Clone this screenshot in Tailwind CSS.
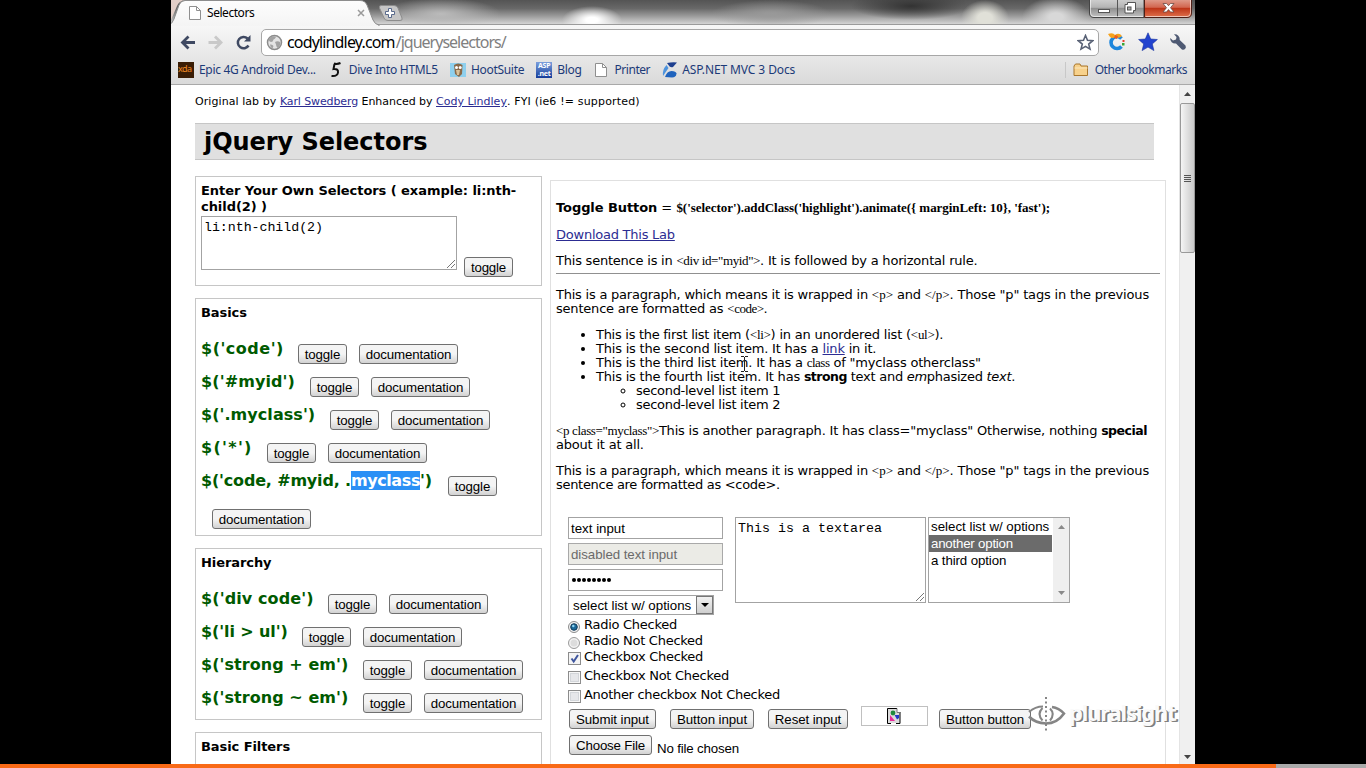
<!DOCTYPE html>
<html lang="en">
<head>
<meta charset="utf-8">
<title>Selectors</title>
<script src="https://cdn.jsdelivr.net/npm/@tailwindcss/browser@4"></script>
</head>
<body class="bg-black h-[768px] w-[1366px] overflow-hidden flex flex-col">
<div class="relative ml-[171px] w-[1024px] h-[764px] shrink-0 bg-white overflow-hidden flex flex-col">

  <!-- tab strip -->
  <div class="relative h-[24px] shrink-0 flex bg-[radial-gradient(ellipse_30px_14px_at_421px_20px,#fff_20%,transparent),radial-gradient(ellipse_24px_18px_at_814px_18px,#e0e0d8_30%,transparent),radial-gradient(ellipse_34px_20px_at_885px_17px,#d8d8d8_20%,transparent),radial-gradient(ellipse_60px_14px_at_600px_14px,#999,transparent),radial-gradient(ellipse_60px_16px_at_270px_14px,#bbb,transparent),radial-gradient(ellipse_60px_14px_at_740px_6px,#333,transparent),linear-gradient(#545454,#686868_35%,#a0a0a0_70%,#d4d4d4)]">
    <svg class="absolute left-0 top-0" width="240" height="26" viewBox="0 0 240 26">
      <defs><linearGradient id="tb" x1="0" y1="0" x2="0" y2="1"><stop offset="0" stop-color="#fdfdfd"/><stop offset="1" stop-color="#f4f4f4"/></linearGradient></defs>
      <path d="M0 0H14Q8 1 6 6L0 20Z" fill="#e3cfc8"/>
      <path d="M-2 25Q1 24 3 19L8 5Q10 0.5 14 0.5H189Q194 0.500 196 5L202 20Q204 24.500 208 25V27H-2Z" fill="url(#tb)" stroke="#8d8d8d"/>
      <path d="M210.500 5.500H223Q226 5.500 227 8L231 18Q232 20.500 229 20.500H217Q214 20.500 213 18L208.500 8Q207.500 5.500 210.500 5.500Z" fill="#c6c6c6" stroke="#8c8c8c"/>
      <path d="M217.500 8.500h3v3h3v3h-3v3h-3v-3h-3v-3h3Z" fill="#fff" stroke="#5a6b8c"/>
      <path d="M18.500 6.500h7l4 4v9h-11Z" fill="#fff" stroke="#8f8f8f"/><path d="M25.500 6.500v4h4" fill="none" stroke="#8f8f8f"/>
      <path d="M187 10l6 6M193 10l-6 6" stroke="#9a9a9a" stroke-width="1.500"/>
    </svg>
    <span class="relative ml-[36px] mt-[5px] font-['Noto_Sans',sans-serif] text-[12px] leading-[16px] tracking-[-0.45px]">Selectors</span>
    <svg class="absolute left-[918px] top-0" width="106" height="20" viewBox="0 0 106 20">
      <defs>
        <linearGradient id="gb" x1="0" y1="0" x2="0" y2="1"><stop offset="0" stop-color="#d0d0d0"/><stop offset=".45" stop-color="#b4b4b4"/><stop offset=".5" stop-color="#8f8f8f"/><stop offset="1" stop-color="#c4c4c4"/></linearGradient>
        <linearGradient id="rb" x1="0" y1="0" x2="0" y2="1"><stop offset="0" stop-color="#e0a090"/><stop offset=".45" stop-color="#d2664f"/><stop offset=".5" stop-color="#bd3417"/><stop offset="1" stop-color="#e0734f"/></linearGradient>
      </defs>
      <path d="M0.500 -1V13Q0.500 17.500 5 17.500H55V-1Z" fill="url(#gb)" stroke="#444"/>
      <path d="M55.500 -1V17.500H98Q102.500 17.500 102.500 13V-1Z" fill="url(#rb)" stroke="#4d2018"/>
      <path d="M28.500 0V17" stroke="#555"/>
      <path d="M1.500 0V13Q1.500 16.500 5 16.500H54M56.500 16.500H98Q101.500 16.500 101.500 13V0" fill="none" stroke="#fff" stroke-opacity=".6"/>
      <rect x="9.500" y="9.500" width="11" height="3" fill="#fff" stroke="#555"/>
      <path d="M38.500 2.500h8v8h-2v2.500h-8.500V4.500h2.500Z" fill="#fff" stroke="#555"/><rect x="38.500" y="7" width="3.500" height="3" fill="#aaa" stroke="#555"/>
      <path d="M74 3.500h3.500l2 2.200 2-2.200H85l-3.500 4.200L85 12h-3.500l-2-2.400-2 2.400H74l3.500-4.300Z" fill="#fff" stroke="#6b4a44" stroke-width=".8"/>
    </svg>
  </div>

  <!-- toolbar -->
  <div class="h-[61px] shrink-0 bg-linear-to-b from-[#f7f7f7] to-[#dadada] border-t border-b border-t-[#9b9b9b] border-b-[#a9a9a9] flex flex-col">
    <div class="flex items-center h-[33px] pt-[1px]">
      <svg class="shrink-0" width="90" height="30" viewBox="0 0 90 30">
        <path d="M17.500 9.500L11.500 15.500L17.500 21.500M12 15.500H24" fill="none" stroke="#3f4962" stroke-width="2.800"/>
        <path d="M44 9.500L50 15.500L44 21.500M49.500 15.500H37.500" fill="none" stroke="#c9c9c9" stroke-width="2.800"/>
        <path d="M76.500 11.500A5.700 5.700 0 1 0 77.500 18.500" fill="none" stroke="#3f4962" stroke-width="2.500"/><path d="M79.500 8v6.500h-6.500Z" fill="#3f4962"/>
      </svg>
      <div class="w-[838px] h-[27px] rounded-[5px] border border-[#a7a7a7] bg-white flex items-center pl-[4px] pr-[4px] font-['Noto_Sans',sans-serif] text-[16px] leading-[24px] tracking-[-0.84px]">
        <svg width="17" height="17" viewBox="0 0 17 17"><circle cx="8.500" cy="8.500" r="7" fill="#e4e4e4" stroke="#8c8c8c" stroke-width="1.500"/><path d="M4 3.500Q8 1.500 10 3Q9 5 7.500 5.500Q7 8 5 8Q3 7.500 2.500 6ZM9 8Q12 6.500 14.500 8.500Q14.500 12 11.500 14Q10 12 10 10.500ZM4 10.500Q6.500 10 7.500 12L6.500 14.500Q4 13.500 4 10.500Z" fill="#a3a3a3"/></svg>
        <span class="ml-[4px]">codylindley.com</span><span class="text-[#808080] tracking-[-0.99px] ml-[1px]">/jqueryselectors/</span>
        <svg class="ml-auto" width="17" height="17" viewBox="0 0 17 17"><path d="M8.500 1.500l2 4.800 5.200.4-4 3.400 1.300 5-4.500-2.700L4 15.100l1.300-5-4-3.400 5.200-.4Z" fill="#fff" stroke="#596276" stroke-width="1.600"/></svg>
      </div>
      <svg class="ml-[8px]" width="20" height="22" viewBox="0 0 20 22"><path d="M14.500 7.500A6 6 0 1 0 14.500 15.500" fill="none" stroke="#1d86dc" stroke-width="3.600"/><path d="M1 3Q6 1 8 4Q12 1 15 5Q12 8 9 6Q5 8 3 6Z" fill="#f6a21c"/><path d="M8 4l3 1-1 3-3-1Z" fill="#ee5a1c"/><path d="M15.500 9h2v2h-2Z" fill="#e83c2b"/><path d="M15 12h2.500v2.500h-2.500Z" fill="#3aa535"/></svg>
      <svg class="ml-[11px]" width="20" height="20" viewBox="0 0 20 20"><path d="M10 .800l2.700 6.200 6.700.500-5.100 4.400 1.600 6.700-5.900-3.500-5.900 3.500 1.600-6.700L.600 7.500l6.700-.500Z" fill="#2243cf" stroke="#16309d" stroke-width=".6"/></svg>
      <svg class="ml-[11px]" width="18" height="18" viewBox="0 0 18 18"><path d="M5 1.300A5 5 0 0 1 10.700 7L16.500 12.500Q17.500 14.500 16 16T12.600 16.200L7 10.500A5 5 0 0 1 1.200 5L4 7.500L7 6.500L7.500 4Z" fill="#4e5972"/></svg>
    </div>
    <div class="flex items-center h-[23px] font-['Noto_Sans',sans-serif] text-[12px] leading-[16px] tracking-[-0.3px] text-[#1c3a78]">
      <div class="ml-[7px] w-[16px] h-[16px] bg-[#3a1d05] text-[#f08a24] text-[9px] leading-[14px] tracking-[-0.5px] overflow-hidden">xda</div>
      <span class="ml-[5px]">Epic 4G Android Dev...</span>
      <svg class="ml-[14px]" width="13" height="16" viewBox="0 0 13 16"><path d="M4 1.500Q7 2.500 10.500 1M4.500 2L3.500 7Q8.500 6.500 8 10.500T1.500 14" fill="none" stroke="#111" stroke-width="2"/></svg>
      <span class="ml-[6px]">Dive Into HTML5</span>
      <svg class="ml-[12px]" width="16" height="16" viewBox="0 0 16 16"><path d="M0 1h16v14H0Z" fill="#8fd0ee"/><path d="M4 3Q8 0 12.500 3L12 12L9 15L5 12Z" fill="#8a6a4a"/><circle cx="6.500" cy="5.500" r="1.500" fill="#fff"/><circle cx="10.200" cy="5.500" r="1.500" fill="#fff"/><path d="M6 8h4l-1 5H7Z" fill="#d9c19a"/></svg>
      <span class="ml-[5px]">HootSuite</span>
      <div class="ml-[12px] w-[16px] h-[16px] bg-linear-to-b from-[#7d9fdc] to-[#153c9a] text-white font-bold text-[7px] leading-[8px] tracking-[-0.2px] text-center">ASP<br>.net</div>
      <span class="ml-[5px] tracking-[-0.3px]">Blog</span>
      <svg class="ml-[14px]" width="12" height="14" viewBox="0 0 12 14"><path d="M.5.500h7l4 4v9H.5Z" fill="#fff" stroke="#8f8f8f"/><path d="M7.500.500v4h4" fill="none" stroke="#8f8f8f"/></svg>
      <span class="ml-[7px] tracking-[-0.45px]">Printer</span>
      <svg class="ml-[12px]" width="16" height="16" viewBox="0 0 16 16"><path d="M5 1Q10 0 15 .500L11 5Q8 6 6.500 3Z" fill="#1d3f8f"/><path d="M4.500 3L6.500 6L1 14Q0 8 4.500 3Z" fill="#4d93dd"/><path d="M3 15Q5 9 9.500 9T14.500 11.500Q14 15.500 10 15.500Z" fill="#1f63bd"/></svg>
      <span class="ml-[4px] tracking-[-0.1px]">ASP.NET MVC 3 Docs</span>
      <div class="ml-auto h-[16px] w-px bg-[#c8c8c8]"></div>
      <svg class="ml-[7px]" width="16" height="14" viewBox="0 0 16 14"><path d="M1 12.500V3L2.500 1H7l1 2h6.500v9.500Z" fill="#f7d18b" stroke="#a9762c"/><path d="M1.500 5h13" stroke="#fbe6bd"/></svg>
      <span class="ml-[6px] mr-[8px] tracking-[-0.47px]">Other bookmarks</span>
    </div>
  </div>

  <!-- viewport -->
  <div class="flex h-[679px] text-black">
    <div class="w-[1008px] h-full overflow-hidden pl-[24px] font-['DejaVu_Sans',sans-serif] text-[13px] leading-[14px] tracking-[-0.2px]">
      <p class="mt-[10px] h-[14px] text-[11px] tracking-[0px] whitespace-pre flex"><span class="tracking-[0.07px]">Original lab by </span><span class="underline text-[#2c2c92] tracking-[-0.12px]">Karl Swedberg</span><span class="tracking-[-0.03px]"> Enhanced by </span><span class="underline text-[#2c2c92] tracking-[0px]">Cody Lindley</span><span class="tracking-[0.17px]">. FYI (ie6 != supported)</span></p>
      <h1 class="mt-[14px] w-[959px] h-[37px] bg-[#e0e0e0] border-y border-[#c6c6c6] pl-[9px] text-[24px] leading-[36px] font-bold tracking-[-0.05px]">jQuery Selectors</h1>

      <div class="flex items-start">
        <!-- left column -->
        <div class="w-[347px] mt-[16px] flex flex-col gap-[12px]">
          <section class="border border-[#c6c6c6] h-[110px] px-[5px] pt-[6px]">
            <h2 class="font-bold leading-[16px] tracking-[-0.06px]">Enter Your Own Selectors ( example: li:nth-<br>child(2) )</h2>
            <div class="flex mt-px">
              <div class="w-[256px] h-[54px] border border-[#a3a3a3] pl-[2px] pt-[3px] flex justify-between font-['Liberation_Mono',monospace] text-[13.300px] leading-[15px] tracking-[-0.05px]">li:nth-child(2)<svg class="self-end" width="10" height="10" viewBox="0 0 10 10"><path d="M1 9L9 1M5 9L9 5" stroke="#777"/></svg></div>
              <div class="ml-[7px] mt-[41px] w-[49px] h-[20px] rounded-[3px] border border-[#707070] bg-linear-to-b from-[#f4f4f4] from-50% to-[#d2d2d2] text-center font-['Liberation_Sans',sans-serif] text-[13.300px] leading-[20px]">toggle</div>
            </div>
          </section>

          <section class="border border-[#c6c6c6] h-[238px] px-[5px] pt-[6px]">
            <h2 class="font-bold leading-[16px] tracking-[-0.08px] mb-[18px]">Basics</h2>
            <div id="basics"></div>
          </section>

          <section class="border border-[#c6c6c6] h-[172px] px-[5px] pt-[6px]">
            <h2 class="font-bold leading-[16px] tracking-[-0.08px] mb-[18px]">Hierarchy</h2>
            <div id="hierarchy"></div>
          </section>

          <section class="border border-[#c6c6c6] h-[172px] px-[5px] pt-[6px]">
            <h2 class="font-bold leading-[16px] tracking-[-0.08px]">Basic Filters</h2>
          </section>
        </div>

        <!-- right column -->
        <div class="ml-[8px] mt-[20px] w-[616px] h-[640px] border border-[#e0e0e0] px-[5px] pt-[20px]">
          <p class="whitespace-pre flex"><b class="tracking-[-0.08px]">Toggle Button</b><span class="tracking-[0px]"> = </span><b class="font-['Liberation_Serif',serif] tracking-[-0.05px]">$('selector').addClass('highlight').animate({ marginLeft: 10}, 'fast');</b></p>
          <p class="mt-[13px]"><span class="underline text-[#2c2c92] tracking-[-0.24px]">Download This Lab</span></p>
          <p class="mt-[12px] whitespace-pre"><span class="tracking-[-0.22px]">This sentence is in </span><span class="font-['Liberation_Serif',serif] text-[13px] leading-[12px] tracking-[-0.38px]">&lt;div id="myid"&gt;</span>. It is followed by a horizontal rule.</p>
          <div class="mt-[5px] w-[604px] h-px bg-[#909090]"></div>
          <p class="mt-[14px] whitespace-pre"><span class="tracking-[-0.225px]">This is a paragraph, which means it is wrapped in </span><span class="font-['Liberation_Serif',serif] text-[13px] leading-[12px] tracking-[0px]">&lt;p&gt;</span> and <span class="font-['Liberation_Serif',serif] text-[13px] leading-[12px] tracking-[0px]">&lt;/p&gt;</span><span class="tracking-[-0.17px]">. Those "p" tags in the previous</span><br>sentence are formatted as <span class="font-['Liberation_Serif',serif] text-[13px] leading-[12px] tracking-[-0.5px]">&lt;code&gt;</span>.</p>
          <ul class="mt-[12px] pl-[40px] list-disc whitespace-nowrap">
            <li><span class="tracking-[-0.28px]">This is the first list item (</span><span class="font-['Liberation_Serif',serif] text-[13px] leading-[12px] tracking-[-0.3px]">&lt;li&gt;</span>) in an unordered list (<span class="font-['Liberation_Serif',serif] text-[13px] leading-[12px] tracking-[-0.3px]">&lt;ul&gt;</span>).</li>
            <li>This is the second list item. It has a <span class="underline text-[#2c2c92]">link</span> in it.</li>
            <li><span class="tracking-[-0.2px]">This is the third list item. It has a </span><span class="font-['Liberation_Serif',serif] text-[13px] leading-[12px] tracking-[-0.5px]">class</span> of "myclass otherclass"</li>
            <li><span class="tracking-[-0.2px]">This is the fourth list item. It has </span><b class="text-[12.500px] leading-[12px] tracking-[-0.5px]">strong</b><span class="tracking-[-0.27px]"> text and <i>em</i>phasized <i>text</i>.</span>
              <ul class="pl-[40px] list-[circle] tracking-[-0.29px]"><li>second-level list item 1</li><li>second-level list item 2</li></ul>
            </li>
          </ul>
          <p class="mt-[12px] whitespace-pre"><span class="font-['Liberation_Serif',serif] text-[13px] leading-[12px] tracking-[-0.35px]">&lt;p class="myclass"&gt;</span>This is another paragraph. It has class="myclass" Otherwise, nothing <b class="text-[12.500px] leading-[12px] tracking-[-0.48px]">special</b><br>about it at all.</p>
          <p class="mt-[12px] whitespace-pre"><span class="tracking-[-0.225px]">This is a paragraph, which means it is wrapped in </span><span class="font-['Liberation_Serif',serif] text-[13px] leading-[12px] tracking-[0px]">&lt;p&gt;</span> and <span class="font-['Liberation_Serif',serif] text-[13px] leading-[12px] tracking-[0px]">&lt;/p&gt;</span><span class="tracking-[-0.17px]">. Those "p" tags in the previous</span><br><span class="tracking-[-0.3px]">sentence are formatted as &lt;code&gt;.</span></p>

          <div class="mt-[25px] pl-[12px]">
            <div class="flex items-start h-[98px] font-['Liberation_Sans',sans-serif] text-[13.300px] tracking-[0px]">
              <div class="w-[155px] flex flex-col gap-[4px] leading-[22px]">
                <div class="h-[22px] border border-[#a3a3a3] pl-[2px]">text input</div>
                <div class="h-[22px] border border-[#a9a9a9] bg-[#ebebe6] text-[#6a6a6a] pl-[2px] tracking-[-0.06px]">disabled text input</div>
                <div class="h-[22px] border border-[#a3a3a3] pl-[3px] flex items-center gap-[1px]">
                  <i class="size-[4px] rounded-full bg-black"></i><i class="size-[4px] rounded-full bg-black"></i><i class="size-[4px] rounded-full bg-black"></i><i class="size-[4px] rounded-full bg-black"></i><i class="size-[4px] rounded-full bg-black"></i><i class="size-[4px] rounded-full bg-black"></i><i class="size-[4px] rounded-full bg-black"></i><i class="size-[4px] rounded-full bg-black"></i>
                </div>
                <div class="w-[146px] h-[20px] border border-[#a3a3a3] pl-[4px] flex justify-between"><span class="leading-[20px] whitespace-nowrap">select list w/ options</span><div class="w-[17px] h-[18px] border border-[#777] bg-linear-to-b from-[#f2f2f2] to-[#cfcfcf] flex items-center justify-center"><svg width="8" height="4"><path d="M0 0h8L4 4Z" fill="#000"/></svg></div></div>
              </div>
              <div class="ml-[12px] w-[191px] h-[86px] border border-[#a3a3a3] pl-[2px] pt-[3px] flex justify-between font-['Liberation_Mono',monospace] leading-[15px] tracking-[0.02px]">This is a textarea<svg class="self-end" width="10" height="10" viewBox="0 0 10 10"><path d="M1 9L9 1M5 9L9 5" stroke="#777"/></svg></div>
              <div class="ml-[2px] w-[142px] h-[86px] border border-[#a3a3a3] flex whitespace-nowrap">
                <div class="w-[123px] leading-[17px] shrink-0"><div class="h-[17px] pl-[2px]">select list w/ options</div><div class="h-[17px] pl-[2px] bg-[#6b6b6b] text-white tracking-[-0.22px]">another option</div><div class="h-[17px] pl-[2px] tracking-[-0.12px]">a third option</div></div>
                <div class="ml-px flex-1 bg-[#efefef] flex flex-col justify-between items-center py-[7px]"><svg width="7" height="4"><path d="M0 4h7L3.500 0Z" fill="#8a8a8a"/></svg><svg width="7" height="4"><path d="M0 0h7L3.500 4Z" fill="#8a8a8a"/></svg></div>
              </div>
            </div>

            <div class="flex flex-col whitespace-nowrap mt-[3px] tracking-[-0.27px]">
              <div class="flex h-[16px]"><svg class="mt-[3px] mr-[4px]" width="12" height="12" viewBox="0 0 12 12"><circle cx="6" cy="6" r="5.500" fill="#f2f2f2" stroke="#8c8c8c"/><circle cx="6" cy="6" r="3.300" fill="#1c6a9a" stroke="#123a58"/><circle cx="5.300" cy="5" r="1.200" fill="#8fd6f5"/></svg>Radio Checked</div>
              <div class="flex h-[16px]"><svg class="mt-[3px] mr-[4px]" width="12" height="12" viewBox="0 0 12 12"><circle cx="6" cy="6" r="5.500" fill="#f2f2f2" stroke="#9a9a9a"/><circle cx="6" cy="6" r="3.500" fill="#dcdcdc"/></svg>Radio Not Checked</div>
              <div class="flex h-[19px]"><svg class="mt-[2px] mr-[4px]" width="13" height="13" viewBox="0 0 13 13"><rect x=".5" y=".5" width="12" height="12" fill="#f4f4f4" stroke="#8c8c8c"/><path d="M3.500 6.500L5.700 9.500L10 3" fill="none" stroke="#3f569e" stroke-width="2"/></svg><span class="-ml-px">Checkbox Checked</span></div>
              <div class="flex h-[19px]"><svg class="mt-[2px] mr-[4px]" width="13" height="13" viewBox="0 0 13 13"><rect x=".5" y=".5" width="12" height="12" fill="#f7f7f7" stroke="#8c8c8c"/><rect x="2.500" y="2.500" width="8" height="8" fill="#e6e7ea" stroke="#d3d6da"/></svg><span class="-ml-px">Checkbox Not Checked</span></div>
              <div class="flex h-[18px] tracking-[-0.3px]"><svg class="mt-[2px] mr-[4px]" width="13" height="13" viewBox="0 0 13 13"><rect x=".5" y=".5" width="12" height="12" fill="#f7f7f7" stroke="#8c8c8c"/><rect x="2.500" y="2.500" width="8" height="8" fill="#e6e7ea" stroke="#d3d6da"/></svg><span class="-ml-px">Another checkbox Not Checked</span></div>
            </div>

            <div class="flex items-start pl-px font-['Liberation_Sans',sans-serif] text-[13.300px] leading-[20px] tracking-[-0.08px] text-center whitespace-nowrap">
              <div class="mt-[3px] w-[87px] h-[20px] rounded-[3px] border border-[#707070] bg-linear-to-b from-[#f4f4f4] from-50% to-[#d2d2d2]">Submit input</div>
              <div class="mt-[3px] ml-[14px] w-[84px] h-[20px] rounded-[3px] border border-[#707070] bg-linear-to-b from-[#f4f4f4] from-50% to-[#d2d2d2]">Button input</div>
              <div class="mt-[3px] ml-[14px] w-[80px] h-[20px] rounded-[3px] border border-[#707070] bg-linear-to-b from-[#f4f4f4] from-50% to-[#d2d2d2]">Reset input</div>
              <div class="ml-[13px] w-[67px] h-[20px] border border-[#c0c0c0] flex items-center justify-center"><svg class="-ml-[2px]" width="14" height="16" viewBox="0 0 14 16"><path d="M1 1h9l3 3v11H1Z" fill="#dcdcdc"/><path d="M4 15.500H.5V.5H10M13 5v10.500H9" fill="none" stroke="#000"/><path d="M10 .500v4h4" fill="#fff" stroke="#777"/><circle cx="6" cy="5" r="2.400" fill="#1f8a3c"/><path d="M3 7l5 6H3Z" fill="#e8289a"/><path d="M7.500 7h4.500v3l-2 1.500Z" fill="#2438c8"/></svg></div>
              <div class="mt-[3px] ml-[11px] w-[92px] h-[20px] rounded-[3px] border border-[#707070] bg-linear-to-b from-[#f4f4f4] from-50% to-[#d2d2d2]">Button button</div>
            </div>
            <div class="flex items-start pl-px mt-[6px] font-['Liberation_Sans',sans-serif] text-[13.300px] leading-[19px] whitespace-nowrap text-center">
              <div class="w-[83px] h-[20px] rounded-[3px] border border-[#707070] bg-linear-to-b from-[#f4f4f4] from-50% to-[#d2d2d2] tracking-[-0.2px]">Choose File</div>
              <span class="ml-[5px] mt-[4px] tracking-[-0.16px]">No file chosen</span>
            </div>
          </div>
        </div>
      </div>
    </div>

    <!-- page scrollbar -->
    <div class="w-[16px] h-full bg-[#f0f0f0] border-l border-[#e4e4e4] flex flex-col items-center">
      <svg class="mt-[7px]" width="7" height="4"><path d="M0 4h7L3.500 0Z" fill="#444"/></svg>
      <div class="mt-[7px] w-[15px] h-[150px] rounded-[2px] border border-[#999] bg-linear-to-r from-[#f5f5f5] to-[#c9c9c9] flex flex-col items-center justify-center gap-px"><i class="w-[7px] h-px bg-[#555]"></i><i class="w-[7px] h-px bg-[#555]"></i><i class="w-[7px] h-px bg-[#555]"></i><i class="w-[7px] h-px bg-[#555]"></i></div>
      <svg class="mt-auto mb-[5px]" width="7" height="4"><path d="M0 0h7L3.500 4Z" fill="#444"/></svg>
    </div>
  </div>

  <!-- text cursor -->
  <svg class="absolute left-[570px] top-[356px]" width="7" height="16" viewBox="0 0 7 16"><path d="M0 .500h3M4 .500h3M3.500 1v14M0 15.500h3M4 15.500h3" stroke="#222"/></svg>

  <!-- video watermark -->
  <svg class="absolute left-[856px] top-[696px]" width="40" height="36" viewBox="0 0 40 36">
    <g fill="none" stroke="#858585"><path d="M2 16Q8 10.500 16 10.500" stroke-width="1.800"/><path d="M25 11Q32 12 37 17.500Q30 27.500 19 27.500Q8 27 2 20.500" stroke-width="2.600"/><path d="M15.500 12Q9.500 18 15.500 24.500M23 12.500Q28.500 18 23 24.500" stroke-width="2"/><path d="M19 1V35" stroke-width="2" stroke-dasharray="2 2.500"/></g>
  </svg>
  <div class="absolute left-[898px] top-[697px] w-[112px] h-[34px] whitespace-nowrap font-['Noto_Sans',sans-serif] font-bold text-[22px] leading-[31px] tracking-[-1.15px] text-[#fafafa] [text-shadow:1px_1px_0_#808080,2px_1px_0_#808080]">pluralsight</div>
</div>

<!-- playback progress -->
<div class="flex h-[4px] shrink-0"><div class="w-[1276px] bg-[#f96a17]"></div><div class="flex-1 bg-[#aaa]"></div></div>

<script>
  // [code before selection, selected part, code after selection, column width up to the first button, letter spacing]
  const groups = {
    basics: [["$('code')", "", "", 97, 0.5], ["$('#myid')", "", "", 109, 0.1], ["$('.myclass')", "", "", 129, 0.05], ["$('*')", "", "", 66, 1.3], ["$('code, #myid, .", "myclass", "')", 247, -0.18]],
    hierarchy: [["$('div code')", "", "", 127, 0.1], ["$('li > ul')", "", "", 101, -0.1], ["$('strong + em')", "", "", 162, 0.05], ["$('strong ~ em')", "", "", 162, 0.05]]
  };
  const btn = "mt-[5px] h-[20px] shrink-0 rounded-[3px] border border-[#707070] bg-linear-to-b from-[#f4f4f4] from-50% to-[#d2d2d2] text-center font-['Liberation_Sans',sans-serif] text-[13.300px] leading-[20px] tracking-[-0.15px]";
  const esc = s => s.replace(/>/g, "&gt;");
  for (const [id, rows] of Object.entries(groups)) {
    document.getElementById(id).innerHTML = rows.map(([a, sel, b, w, ls]) => `
      <div class="flex flex-wrap items-start">
        <div class="h-[33px] shrink-0 whitespace-nowrap font-bold text-[16px] leading-[20px] text-[#005a00]" style="width:${w}px;letter-spacing:${ls}px">${esc(a)}<span class="bg-[#2b90f5] text-white tracking-[-0.4px]">${sel}</span>${b}</div>
        <div class="${btn} w-[49px] mr-[12px]">toggle</div>
        <div class="${btn} w-[99px] ${sel ? 'ml-[11px]' : ''}">documentation</div>
      </div>`).join("");
  }
</script>
</body>
</html>
